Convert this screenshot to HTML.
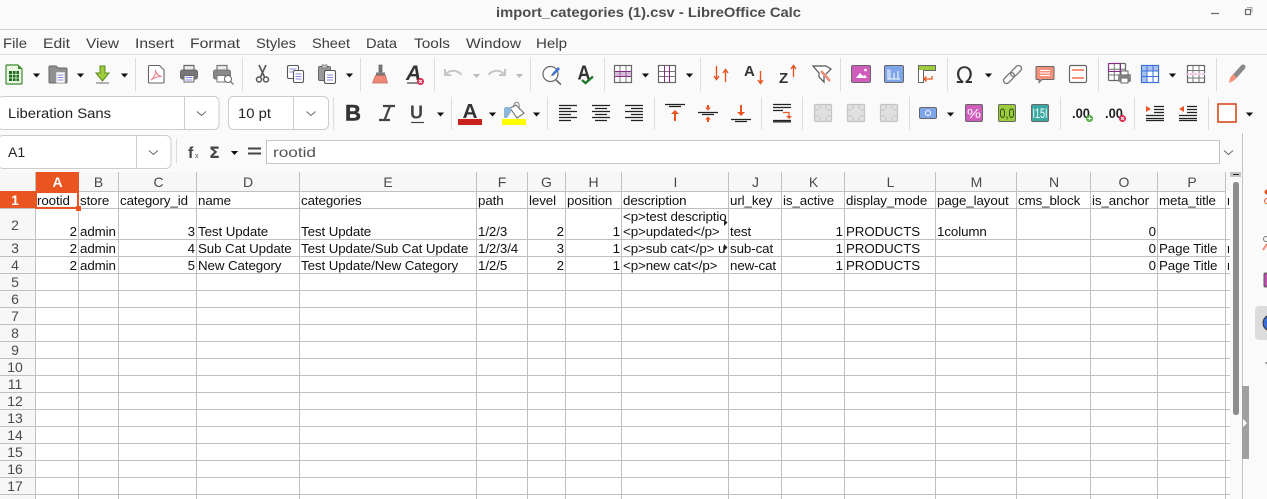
<!DOCTYPE html>
<html><head><meta charset="utf-8"><title>import_categories (1).csv - LibreOffice Calc</title>
<style>
html,body{margin:0;padding:0;background:#fafafa;width:1267px;height:499px;overflow:hidden}
svg{display:block}
.u{font-family:"Liberation Sans",sans-serif;font-size:14px;fill:#3d3d3d}
.c{font-family:"Liberation Sans",sans-serif;font-size:13.33px;letter-spacing:-.09px;fill:#111}
.r{text-anchor:end}
.h{font-family:"Liberation Sans",sans-serif;font-size:14px;fill:#4a4a4a;text-anchor:middle}
.g{stroke:#c0c0c0;stroke-width:1;fill:none}
.s{stroke:#dcdcdc;stroke-width:1}
.d{fill:none;stroke:#555;stroke-width:1.3}
.o{fill:none;stroke:#e95420;stroke-width:1.4}
.k{fill:none;stroke:#222;stroke-width:1.2}
.w{fill:#fff;stroke:#666;stroke-width:1.2}
</style></head><body>
<svg width="1267" height="499" viewBox="0 0 1267 499" xmlns="http://www.w3.org/2000/svg">
<defs>
<path id="ar" d="M-3.6-2h7.2L0 2z" fill="#111"/>
<path id="ag" d="M-3.6-2h7.2L0 2z" fill="#bbb"/>
<path id="chev" d="M-4.5-2 0 2 4.5-2" fill="none" stroke="#666" stroke-width="1"/>
<g id="tbl"><rect x=".5" y=".5" width="17" height="17" rx="1" fill="#fff" stroke="#666" stroke-width="1.2"/><path d="M6.3 1v16M12 1v16M1 6.3h16M1 12h16" stroke="#777" stroke-width="1"/></g>
<g id="mrg"><rect x=".5" y=".5" width="17" height="17" rx="1" fill="#e0e0e0" stroke="#c4c4c4" stroke-width="1.2"/><path d="M6 1v4M12 1v4M6 13v4M12 13v4M1 6h4M13 6h4M1 12h4M13 12h4" stroke="#c4c4c4"/></g>
<clipPath id="ci"><rect x="622" y="209" width="104" height="48"/></clipPath>
<clipPath id="cq"><rect x="1226" y="190" width="3" height="90"/></clipPath>
</defs>

<rect width="1267" height="499" fill="#fafafa"/>
<!-- title -->
<text x="496" y="17" font-family="Liberation Sans,sans-serif" font-size="14" font-weight="700" fill="#4d4d4d" textLength="305" lengthAdjust="spacingAndGlyphs">import_categories (1).csv - LibreOffice Calc</text>
<path d="M1211 13.500h8" stroke="#666" stroke-width="1.2"/>
<rect x="1245.500" y="9.500" width="5" height="5" fill="none" stroke="#666" stroke-width="1.2"/><path d="M1247 7.500h5v5" fill="none" stroke="#aaa"/>
<path d="M0 29.500h1267" stroke="#d2d2d2" stroke-width="1"/>
<path d="M0 54.500h1267" stroke="#dedede"/>
<!-- menu -->
<g class="u">
<text x="3" y="48" textLength="24" lengthAdjust="spacingAndGlyphs">File</text>
<text x="43" y="48" textLength="27" lengthAdjust="spacingAndGlyphs">Edit</text>
<text x="86" y="48" textLength="33" lengthAdjust="spacingAndGlyphs">View</text>
<text x="135" y="48" textLength="39" lengthAdjust="spacingAndGlyphs">Insert</text>
<text x="190" y="48" textLength="50" lengthAdjust="spacingAndGlyphs">Format</text>
<text x="256" y="48" textLength="40" lengthAdjust="spacingAndGlyphs">Styles</text>
<text x="312" y="48" textLength="38" lengthAdjust="spacingAndGlyphs">Sheet</text>
<text x="366" y="48" textLength="31" lengthAdjust="spacingAndGlyphs">Data</text>
<text x="414" y="48" textLength="36" lengthAdjust="spacingAndGlyphs">Tools</text>
<text x="466" y="48" textLength="55" lengthAdjust="spacingAndGlyphs">Window</text>
<text x="536" y="48" textLength="31" lengthAdjust="spacingAndGlyphs">Help</text>
</g>
<!-- separators row 1 -->
<path class="s" d="M135.500 58v33M242.500 58v33M360.500 58v33M434.500 58v33M530.500 58v33M604.500 58v33M700.500 58v33M840.500 58v33M947.500 58v33M1098.500 58v33M1216.500 58v33"/>
<!-- row 2 separators -->
<path class="s" d="M333.500 97v33M451.500 97v33M547.500 97v33M654.500 97v33M761.500 97v33M802.500 97v33M909.500 97v33M1060.500 97v33M1134.500 97v33M1208.500 97v33M176.500 139v24"/>

<!-- row1 icons -->
<path d="M7 65h11l4 4v14a1 1 0 0 1-1 1H7a1 1 0 0 1-1-1V66a1 1 0 0 1 1-1z" fill="#eaf5e4" stroke="#3b8b2e" stroke-width="1.2"/>
<path d="M18 65l4 4h-4z" fill="#3b8b2e"/>
<rect x="9" y="71" width="10" height="10" fill="#1f6f1f"/><path d="M9 74.500h10M9 78h10M12.500 71v10M16 71v10" stroke="#eaf5e4" stroke-width=".8"/>
<use href="#ar" x="36.500" y="75.500"/>
<path d="M50 66h6l2 2h8a1 1 0 0 1 1 1v13a1 1 0 0 1-1 1H50a1 1 0 0 1-1-1V67a1 1 0 0 1 1-1z" fill="#8f8f8f" stroke="#666"/>
<rect x="56" y="72" width="9" height="11" fill="#fff" stroke="#999" stroke-width=".7"/><path d="M57.500 75h6M57.500 77.500h6M57.500 80h6" stroke="#8a8ae0"/>
<use href="#ar" x="80.500" y="75.500"/>
<path d="M100 66h5v7h4l-6.500 8-6.500-8h4z" fill="#9ccb3b" stroke="#5a8a1e"/><path d="M96 83h13" stroke="#666"/>
<use href="#ar" x="124.500" y="75.500"/>
<path d="M149.500 65.500h10l4.500 4.500v12a1 1 0 0 1-1 1h-13.500a1 1 0 0 1-1-1V66.500a1 1 0 0 1 1-1z" fill="#fff" stroke="#666" stroke-width="1.1"/>
<path d="M151 80c3-2 5-6 4.500-10 0 3 3 6 6 6.500-3 0-7 1-10.500 3.500z" fill="none" stroke="#e8808a" stroke-width="1.1"/>
<path d="M184 70v-4.500h10V70" fill="#eee" stroke="#666" stroke-width="1.2"/><rect x="180.500" y="70" width="17" height="9" rx="2" fill="#777" stroke="#666"/><rect x="184" y="75.500" width="10" height="6.500" fill="#fff" stroke="#666"/><path d="M185.500 77.500h7M185.500 80h7" stroke="#8a8ae0"/>
<path d="M217 70v-4.500h10V70" fill="#eee" stroke="#777" stroke-width="1.2"/><rect x="213.500" y="70" width="17" height="9" rx="2" fill="#888" stroke="#777"/><rect x="217" y="75.500" width="8" height="6.500" fill="#fff" stroke="#777"/><circle cx="228" cy="79" r="3.500" fill="#fff" stroke="#666"/><path d="M230.500 81.500l3 3" stroke="#666" stroke-width="1.2"/>
<path d="M259 65l5.500 12M266 65l-5.500 12" stroke="#555" stroke-width="1.6" fill="none"/><circle cx="259" cy="79.500" r="2.500" fill="none" stroke="#555" stroke-width="1.5"/><circle cx="266" cy="79.500" r="2.500" fill="none" stroke="#555" stroke-width="1.5"/>
<rect x="287.500" y="65.500" width="11" height="13" rx="1.500" fill="#fff" stroke="#555" stroke-width="1.1"/><path d="M289.500 69h7M289.500 72h7" stroke="#8a8ae0"/><rect x="293.500" y="70.500" width="10" height="12" rx="1.500" fill="#fff" stroke="#555" stroke-width="1.1"/><path d="M295.500 74h6M295.500 76.500h6M295.500 79h6" stroke="#8a8ae0"/>
<rect x="318.500" y="66.500" width="12" height="14" rx="1.500" fill="#999" stroke="#666"/><rect x="322" y="65" width="5" height="3" fill="#ccc" stroke="#666" stroke-width=".7"/><rect x="324.500" y="70.500" width="11" height="13" rx="1.500" fill="#fff" stroke="#555" stroke-width="1.1"/><path d="M327 75h6M327 77.500h6M327 80h6" stroke="#8a8ae0"/>
<use href="#ar" x="349.500" y="75.500"/>
<path d="M379 65h3v7h-3z" fill="#777" stroke="#666" stroke-width=".8"/><path d="M376 72.500h9v3h-9z" fill="#777"/><path d="M375.500 75.500h10l2 7.500h-15z" fill="#f08a78" stroke="#c06858" stroke-width=".7"/>
<text x="406" y="80" font-family="Liberation Sans,sans-serif" font-size="21" font-style="italic" font-weight="700" fill="#333">A</text>
<path d="M407 83h13" stroke="#444" stroke-width="1.2"/><circle cx="420.500" cy="81.500" r="3.500" fill="#d9264a"/><path d="M419 80l3 3M422 80l-3 3" stroke="#fff"/>
<!-- undo redo -->
<path d="M445 69v6h6M445.500 75c3-5 10-6 16-.500" fill="none" stroke="#c4c4c4" stroke-width="2"/>
<use href="#ag" x="476.500" y="76"/>
<path d="M505 69v6h-6M504.500 75c-3-5-10-6-16-.500" fill="none" stroke="#c4c4c4" stroke-width="2"/>
<use href="#ag" x="519.500" y="76"/>
<!-- find -->
<circle cx="550.500" cy="74" r="7.500" fill="#fff" stroke="#666" stroke-width="1.2"/><path d="M556 80l5 4.500" stroke="#666" stroke-width="1.6"/><path d="M551 75l7-8 2 2-7 7z" fill="#3b6fd8"/><path d="M550 77l1.500-2 1.500 1z" fill="#f0b060"/>
<text x="577.500" y="79.500" font-family="Liberation Sans,sans-serif" font-size="20" font-weight="700" fill="#333" textLength="13" lengthAdjust="spacingAndGlyphs">A</text>
<path d="M582 80l3.500 3 7.500-6.500" fill="none" stroke="#1f7a2a" stroke-width="2.400"/>
<!-- tables -->
<rect x="614.500" y="65.500" width="17" height="17" fill="#fff" stroke="#666" stroke-width="1.2"/><rect x="615" y="71.500" width="16" height="5" fill="#d8b8dc"/><path d="M620 66v16M626 66v16" stroke="#777"/><path d="M615 71.500h16M615 76.500h16" stroke="#8b2a8b"/>
<use href="#ar" x="645.500" y="75.500"/>
<rect x="658.500" y="65.500" width="17" height="17" fill="#fff" stroke="#666" stroke-width="1.2"/><path d="M659 71.500h16M659 76.500h16" stroke="#777"/><path d="M664.500 66v16M669.500 66v16" stroke="#8b2a8b"/>
<use href="#ar" x="689.500" y="75.500"/>
<!-- sort -->
<path class="o" d="M716.500 66v13M714 76l2.500 3.500 2.500-3.500M725.500 82V70M723 73l2.500-3.500L728 73"/>
<text x="744" y="76" font-family="Liberation Sans,sans-serif" font-size="15" font-weight="700" fill="#333">A</text><path class="o" d="M760.500 71v12M758 80l2.500 3.500 2.500-3.500"/>
<text x="779" y="83" font-family="Liberation Sans,sans-serif" font-size="15" font-weight="700" fill="#333">Z</text><path class="o" d="M793.500 77V66M791 69l2.500-3.500L796 69"/>
<path d="M813 66h13l5 3-7 7v6l-5-5v-4z" fill="#fff" stroke="#555" stroke-width="1.2"/><path d="M821 71l9 10" stroke="#f08a78" stroke-width="2.500"/>
<!-- image/chart -->
<rect x="851.500" y="65.500" width="19" height="17" rx="1.500" fill="#d05cbb" stroke="#666"/><path d="M856 78l4-5 3 3 2-1 2 3z" fill="#fff"/><circle cx="865.500" cy="70" r="1.300" fill="#fff"/>
<rect x="884.500" y="65.500" width="19" height="17" rx="1.500" fill="#7ea4ea" stroke="#666"/><path d="M888 69v10h12M890 70v9M894 73v6M898 71v8" stroke="#fff" fill="none"/>
<path d="M918.500 65.500h17v5h-12v12h-5z" fill="#fff" stroke="#666"/><rect x="919" y="66" width="16" height="4" fill="#9ccb3b"/><path d="M932 76v3h-8M926.500 76.500L924 79l2.500 2.500" fill="none" stroke="#e95420" stroke-width="1.300"/>
<!-- omega -->
<text x="956" y="83" font-family="DejaVu Sans,sans-serif" font-size="22" fill="#333">Ω</text>
<use href="#ar" x="988.500" y="75.500"/>
<g transform="rotate(-45 1012.500 74.500)" fill="none" stroke="#777" stroke-width="1.300"><rect x="1001" y="71.500" width="13" height="6" rx="3"/><rect x="1011" y="71.500" width="13" height="6" rx="3"/></g>
<path d="M1037 66.500h16a1 1 0 0 1 1 1v11a1 1 0 0 1-1 1h-11l-3 3v-3h-2a1 1 0 0 1-1-1v-11a1 1 0 0 1 1-1z" fill="#f4917c" stroke="#666"/><path d="M1040 70.500h10M1040 73h10M1040 75.500h10" stroke="#fff"/>
<rect x="1069.500" y="65.500" width="17" height="17" rx="1.500" fill="#fff" stroke="#666" stroke-width="1.200"/><path d="M1072 70h12M1072 78h12" stroke="#f4917c" stroke-width="2"/>
<!-- print range -->
<use href="#tbl" x="1108" y="63"/><rect x="1108.500" y="63.500" width="12" height="8" fill="none" stroke="#8b2a8b"/><rect x="1118" y="74" width="13" height="8" rx="1.500" fill="#888"/><rect x="1121" y="71" width="7" height="4" fill="#fff" stroke="#666"/><rect x="1121" y="78" width="7" height="5" fill="#fff" stroke="#666"/>
<rect x="1141.500" y="65.500" width="17" height="17" fill="#fff" stroke="#3b6fd8" stroke-width="1.200"/><rect x="1142" y="66" width="16" height="5" fill="#a8c0f0"/><rect x="1142" y="66" width="5" height="16" fill="#a8c0f0"/><path d="M1147 66v16M1153 66v16M1142 71h16M1142 76.500h16" stroke="#3b6fd8"/>
<use href="#ar" x="1172.500" y="75.500"/>
<rect x="1187.500" y="65.500" width="17" height="17" fill="#fff" stroke="#666" stroke-width="1.200"/><path d="M1193 66v16M1199 66v16M1188 70.500h16M1188 78h16" stroke="#777"/><rect x="1186" y="73" width="20" height="2" fill="#fff"/><path d="M1186 74h20" stroke="#e07ad0" stroke-dasharray="3 1"/>
<path d="M1235 76l8-9" stroke="#888" stroke-width="5" stroke-linecap="round"/><path d="M1233 74l4 4-4 3-4 2 1-5z" fill="#f4917c"/>

<!-- font box -->
<rect x="-2" y="96.500" width="221" height="33" rx="5" fill="#fff" stroke="#ccc"/><path d="M184.500 97v32" stroke="#ccc"/>
<text x="8" y="118" font-family="Liberation Sans,sans-serif" font-size="14" fill="#222" textLength="103" lengthAdjust="spacingAndGlyphs">Liberation Sans</text>
<use href="#chev" x="201.500" y="113.500"/>
<rect x="228.500" y="96.500" width="100" height="33" rx="5" fill="#fff" stroke="#ccc"/><path d="M293.500 97v32" stroke="#ccc"/>
<text x="238" y="118" font-family="Liberation Sans,sans-serif" font-size="14" fill="#222" textLength="33" lengthAdjust="spacingAndGlyphs">10 pt</text>
<use href="#chev" x="311" y="113.500"/>
<!-- B I U -->
<text x="345" y="120.500" font-family="Liberation Sans,sans-serif" font-size="22" font-weight="700" fill="#333" stroke="#333" stroke-width=".5" textLength="16" lengthAdjust="spacingAndGlyphs">B</text>
<path d="M383 106h12M379 120h11M390 106l-5.500 14" stroke="#444" stroke-width="2.200" fill="none"/>
<text x="410" y="118.500" font-family="Liberation Sans,sans-serif" font-size="18" font-weight="700" fill="#444">U</text><path d="M411 122.500h13" stroke="#444" stroke-width="1.200"/>
<use href="#ar" x="440.500" y="114.500"/>
<text x="462.500" y="118" font-family="Liberation Sans,sans-serif" font-size="20" font-weight="700" fill="#333" textLength="15" lengthAdjust="spacingAndGlyphs">A</text>
<rect x="458" y="119" width="24" height="6" fill="#c9211e"/>
<use href="#ar" x="492.500" y="114.500"/>
<path d="M510 108l6-3 8 8-7 5z" fill="#fff" stroke="#666"/><path d="M505 107h6v5l-4 6h-3v-9z" fill="#8fb8d8"/><path d="M514 107c-1-5 4-6 5-3l.500 6" fill="none" stroke="#888"/>
<rect x="502" y="119" width="24" height="6" fill="#ffff00"/>
<use href="#ar" x="536.500" y="114.500"/>
<!-- align -->
<path class="k" d="M559 105.500h18M559 108.500h12M559 111.500h18M559 114.500h12M559 117.500h18M559 120.500h12"/>
<path class="k" d="M592 105.500h18M595 108.500h12M592 111.500h18M595 114.500h12M592 117.500h18M595 120.500h12"/>
<path class="k" d="M625 105.500h18M631 108.500h12M625 111.500h18M631 114.500h12M625 117.500h18M631 120.500h12"/>
<!-- valign -->
<path class="k" d="M665 104.500h20M669 106.500h12"/><path d="M675 121v-8" stroke="#e95420" stroke-width="2"/><path d="M671 114l4-4 4 4z" fill="#e95420"/>
<path class="k" d="M698 112.500h20M702 114.500h12"/><path d="M708 105v3M708 119v3" stroke="#e95420" stroke-width="2"/><path d="M705 107.500h6l-3 3zM705 119.500h6l-3-3z" fill="#e95420"/>
<path class="k" d="M731 119.500h20M735 121.500h12"/><path d="M741 105v8" stroke="#e95420" stroke-width="2"/><path d="M737 112l4 4 4-4z" fill="#e95420"/>
<!-- wrap -->
<path class="k" d="M773 104.500h18M773 107.500h18M773 110.500h10M773 120.500h18M773 121.900h18"/><path d="M783 112.500h6v4" fill="none" stroke="#e95420" stroke-width="1.200"/><path d="M786 116h6l-3 3z" fill="#e95420"/>
<!-- merge -->
<use href="#mrg" x="814" y="104"/><use href="#mrg" x="847" y="104"/><use href="#mrg" x="880" y="104"/>
<!-- formats -->
<rect x="919.500" y="107.500" width="17" height="11" rx="1.500" fill="#7ea4ea" stroke="#666"/><circle cx="928" cy="113" r="2.500" fill="none" stroke="#fff"/>
<use href="#ar" x="950.500" y="114.500"/>
<rect x="965.500" y="104.500" width="17" height="17" rx="1.500" fill="#d05cbb" stroke="#666"/><text x="967" y="118" font-family="Liberation Sans,sans-serif" font-size="13" fill="#fff" textLength="14" lengthAdjust="spacingAndGlyphs">%</text>
<rect x="998.500" y="104.500" width="17" height="17" rx="1.500" fill="#9ccb3b" stroke="#666"/><text x="999.500" y="118" font-family="Liberation Sans,sans-serif" font-size="14" fill="#2a4a10" textLength="15" lengthAdjust="spacingAndGlyphs">0,0</text>
<rect x="1031.500" y="104.500" width="17" height="17" rx="1.500" fill="#3aa8a0" stroke="#666"/><text x="1032.500" y="118" font-family="Liberation Sans,sans-serif" font-size="14" fill="#fff" textLength="15" lengthAdjust="spacingAndGlyphs">I15I</text>
<!-- decimals -->
<text x="1072" y="118" font-family="Liberation Sans,sans-serif" font-size="14" font-weight="700" fill="#222" textLength="18" lengthAdjust="spacingAndGlyphs">.00</text><circle cx="1089.500" cy="118.500" r="3.500" fill="#4fa83a"/><path d="M1087.500 118.500h4M1089.500 116.500v4" stroke="#fff"/>
<text x="1105" y="118" font-family="Liberation Sans,sans-serif" font-size="14" font-weight="700" fill="#222" textLength="18" lengthAdjust="spacingAndGlyphs">.00</text><circle cx="1122.500" cy="118.500" r="3.500" fill="#d9264a"/><path d="M1121 117l3 3M1124 117l-3 3" stroke="#fff"/>
<!-- indents -->
<path d="M1146 106l5 3-5 3z" fill="#e95420"/><path class="k" d="M1154 106.500h10M1154 109.500h10M1154 112.500h10M1146 115.500h18M1146 118.500h18M1146 120.500h18"/>
<path d="M1184 106l-5 3 5 3z" fill="#e95420"/><path class="k" d="M1187 106.500h10M1187 109.500h10M1187 112.500h10M1179 115.500h18M1179 118.500h18M1179 120.500h18"/>
<rect x="1218" y="104" width="18" height="18" fill="#fff" stroke="#d84a1c" stroke-width="1.600"/>
<use href="#ar" x="1249.500" y="114.500"/>

<!-- formula bar -->
<rect x="-2" y="135.500" width="173" height="33" rx="5" fill="#fff" stroke="#ccc"/><path d="M136.500 136v32" stroke="#ccc"/>
<text x="8" y="157" font-family="Liberation Sans,sans-serif" font-size="14" fill="#222">A1</text>
<use href="#chev" x="153.500" y="152.500"/>
<text x="188" y="158" font-family="Liberation Sans,sans-serif" font-size="16" font-weight="700" fill="#444">f</text><text x="195" y="158" font-family="Liberation Sans,sans-serif" font-size="7" fill="#555">x</text>
<text x="209" y="158" font-family="DejaVu Sans,sans-serif" font-size="16" font-weight="700" fill="#444">Σ</text>
<use href="#ar" x="234.500" y="153"/>
<path d="M248 148.500h13M248 153.500h13" stroke="#444" stroke-width="2"/>
<rect x="266.500" y="140.500" width="953" height="23" fill="#fff" stroke="#c4c4c4"/>
<text x="273" y="157" font-family="Liberation Sans,sans-serif" font-size="14" fill="#555" textLength="43" lengthAdjust="spacingAndGlyphs">rootid</text>
<use href="#chev" x="1228.500" y="152.500"/>

<!-- grid -->
<rect x="0" y="172" width="1230" height="327" fill="#fff"/>
<rect x="0" y="172" width="1230" height="19" fill="#f7f7f7"/>
<rect x="0" y="191" width="35" height="308" fill="#f7f7f7"/>
<path class="g" d="M0 191.500h1226M0 208.500h1230M0 239.500h1230M0 256.500h1230M0 273.500h1230M0 290.500h1230M0 307.500h1230M0 324.500h1230M0 341.500h1230M0 358.500h1230M0 375.500h1230M0 392.500h1230M0 409.500h1230M0 426.500h1230M0 443.500h1230M0 460.500h1230M0 477.500h1230M0 494.500h1230"/>
<path class="g" d="M35.500 172v327M78.500 172v327M118.500 172v327M196.500 172v327M299.500 172v327M476.500 172v327M527.500 172v327M565.500 172v327M621.500 172v327M728.500 172v327M781.500 172v327M844.500 172v327M935.500 172v327M1016.500 172v327M1090.500 172v327M1157.500 172v327M1225.500 172v327"/>
<rect x="36" y="172" width="43" height="19" fill="#e95420"/>
<rect x="0" y="191" width="36" height="17" fill="#e95420"/>
<text class="h" x="57.500" y="187" style="fill:#fff;font-weight:700">A</text>
<g class="h">
<text x="98.500" y="187">B</text><text x="158.500" y="187">C</text><text x="248" y="187">D</text><text x="388" y="187">E</text><text x="502" y="187">F</text><text x="546.500" y="187">G</text><text x="593.500" y="187">H</text><text x="675.500" y="187">I</text><text x="755.500" y="187">J</text><text x="813.500" y="187">K</text><text x="890.500" y="187">L</text><text x="976.500" y="187">M</text><text x="1054" y="187">N</text><text x="1124" y="187">O</text><text x="1192" y="187">P</text>
<text x="15" y="205" style="fill:#fff;font-weight:700">1</text>
<text x="15" y="230">2</text><text x="15" y="253">3</text><text x="15" y="270">4</text><text x="15" y="287">5</text><text x="15" y="304">6</text><text x="15" y="321">7</text><text x="15" y="338">8</text><text x="15" y="355">9</text><text x="15" y="372">10</text><text x="15" y="389">11</text><text x="15" y="406">12</text><text x="15" y="423">13</text><text x="15" y="440">14</text><text x="15" y="457">15</text><text x="15" y="474">16</text><text x="15" y="491">17</text>
</g>
<!-- cells -->
<g class="c">
<text x="37" y="205">rootid</text><text x="80" y="205">store</text><text x="120" y="205">category_id</text><text x="198" y="205">name</text><text x="301" y="205">categories</text><text x="478" y="205">path</text><text x="529" y="205">level</text><text x="567" y="205">position</text><text x="623" y="205">description</text><text x="730" y="205">url_key</text><text x="783" y="205">is_active</text><text x="846" y="205">display_mode</text><text x="937" y="205">page_layout</text><text x="1018" y="205">cms_block</text><text x="1092" y="205">is_anchor</text><text x="1159" y="205">meta_title</text>

<text class="r" x="77" y="236">2</text><text x="80" y="236">admin</text><text class="r" x="195" y="236">3</text><text x="198" y="236">Test Update</text><text x="301" y="236">Test Update</text><text x="478" y="236">1/2/3</text><text class="r" x="564" y="236">2</text><text class="r" x="620" y="236">1</text>
<g clip-path="url(#ci)"><text x="623" y="221">&lt;p&gt;test description</text><text x="623" y="236">&lt;p&gt;updated&lt;/p&gt;</text><text x="623" y="253">&lt;p&gt;sub cat&lt;/p&gt; updated</text></g>
<text x="730" y="236">test</text><text class="r" x="843" y="236">1</text><text x="846" y="236">PRODUCTS</text><text x="937" y="236">1column</text><text class="r" x="1156" y="236">0</text>

<text class="r" x="77" y="253">2</text><text x="80" y="253">admin</text><text class="r" x="195" y="253">4</text><text x="198" y="253">Sub Cat Update</text><text x="301" y="253">Test Update/Sub Cat Update</text><text x="478" y="253">1/2/3/4</text><text class="r" x="564" y="253">3</text><text class="r" x="620" y="253">1</text><text x="730" y="253">sub-cat</text><text class="r" x="843" y="253">1</text><text x="846" y="253">PRODUCTS</text><text class="r" x="1156" y="253">0</text><text x="1159" y="253">Page Title</text>

<text class="r" x="77" y="270">2</text><text x="80" y="270">admin</text><text class="r" x="195" y="270">5</text><text x="198" y="270">New Category</text><text x="301" y="270">Test Update/New Category</text><text x="478" y="270">1/2/5</text><text class="r" x="564" y="270">2</text><text class="r" x="620" y="270">1</text><text x="623" y="270">&lt;p&gt;new cat&lt;/p&gt;</text><text x="730" y="270">new-cat</text><text class="r" x="843" y="270">1</text><text x="846" y="270">PRODUCTS</text><text class="r" x="1156" y="270">0</text><text x="1159" y="270">Page Title</text>
<g clip-path="url(#cq)"><text x="1227" y="253">m</text><text x="1227" y="270">m</text><text x="1227" y="205">m</text></g>
</g>
<path d="M724 219l3.500 3.500-3.500 3.500zM724 244l3.500 3.500-3.500 3.500z" fill="#222"/>
<!-- selection -->
<rect x="36" y="192" width="42" height="16" fill="none" stroke="#e95420" stroke-width="2"/>
<rect x="76" y="206" width="5" height="5" fill="#e95420"/>

<!-- scrollbar -->
<rect x="1230" y="172" width="12" height="327" fill="#fafafa"/>
<rect x="1230" y="172" width="11" height="5" fill="#c4c4c4"/><path d="M1233 174.500h6" stroke="#222"/>
<rect x="1233" y="182" width="6" height="233" rx="2.500" fill="#8c8c8c"/>
<path d="M1242.500 133v366" stroke="#c4c4c4"/>
<rect x="1242" y="386" width="7" height="73" fill="#a0a0a0"/><path d="M1243 419v8l4-4z" fill="#fff"/>
<!-- sidebar icons -->
<circle cx="1267" cy="192" r="2.500" fill="#e95420"/><circle cx="1267" cy="201" r="2.500" fill="none" stroke="#e95420"/>
<path d="M1263 250l4-6" stroke="#f08a78" stroke-width="2"/><circle cx="1266" cy="239" r="2.500" fill="none" stroke="#777"/>
<rect x="1264" y="273" width="6" height="14" rx="1.500" fill="#c050b0" stroke="#555"/>
<rect x="1255" y="306" width="20" height="34" rx="4" fill="#dcdcdc"/>
<circle cx="1271" cy="323" r="8" fill="#3b6fd8" stroke="#333"/>
<path d="M1265.500 363h2" stroke="#222"/>
</svg>
</body></html>
